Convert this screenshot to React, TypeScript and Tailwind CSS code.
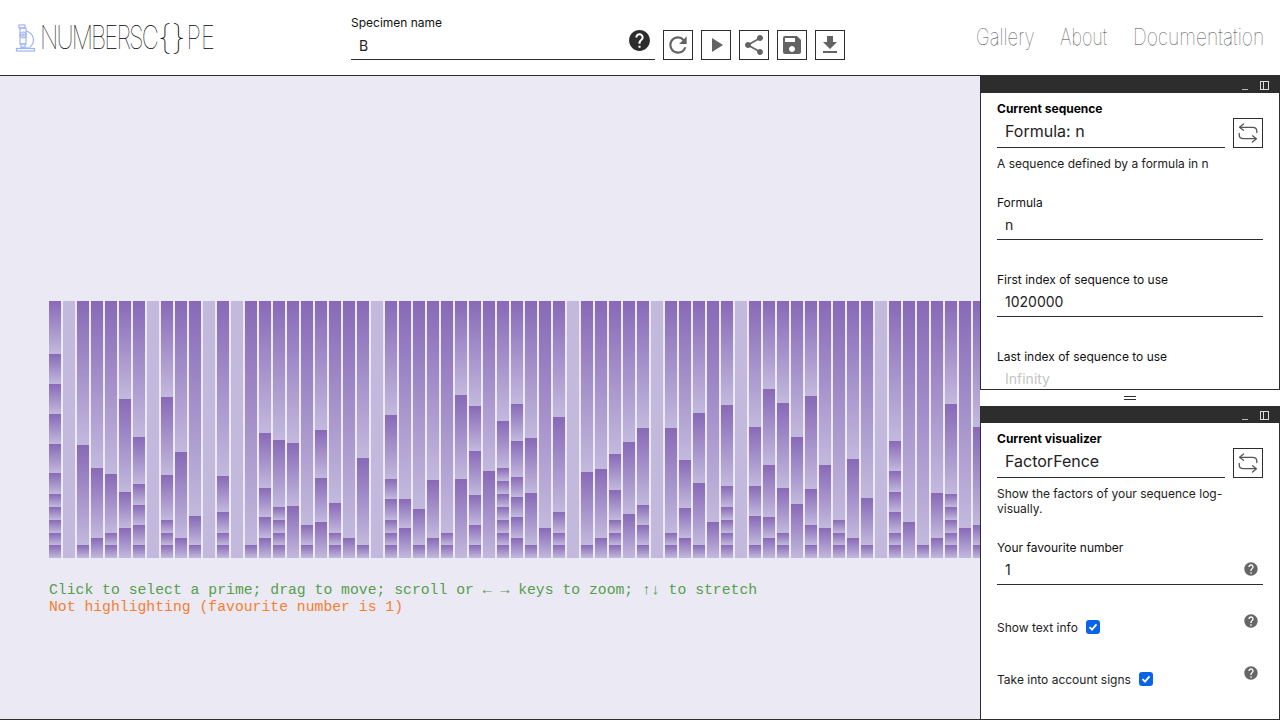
import React from "react";
import { MdHelp, MdPlayArrow, MdRefresh, MdSave, MdShare, MdFileDownload } from "react-icons/md";

const H = 257;
function factors(n: number) {
  const out: number[] = [];
  let m = n;
  for (let p = 2; p * p <= m; p++) {
    while (m % p === 0) {
      out.push(p);
      m = m / p;
    }
  }
  if (m > 1) out.push(m);
  return out.reverse();
}

function Bar({ n }: { n: number }) {
  const fs = factors(n);
  const prime = fs.length === 1;
  return (
    <div className="flex h-[257px] w-[12px] shrink-0 flex-col bg-[#c3b9dd]">
      {!prime &&
        fs.map((p, i) => (
          <div
            key={i}
            className="bg-gradient-to-b from-[#8869b7] to-[#c3b9dd]"
            style={{ height: (Math.log(p) / Math.log(n)) * H }}
          />
        ))}
    </div>
  );
}

function Swap() {
  return (
    <svg width="20" height="20" viewBox="0 0 20 20" fill="none" stroke="#555" strokeWidth="1.3" strokeLinecap="round" strokeLinejoin="round">
      <path d="M5.5 1 L1.6 4.2 L5.5 7.2" />
      <path d="M2 4.3 H14.5 Q18.8 4.3 18.8 8 V9.5" />
      <path d="M14.5 19 L18.4 15.8 L14.5 12.8" />
      <path d="M18 15.7 H5.5 Q1.2 15.7 1.2 12 V10.5" />
    </svg>
  );
}

function IconBox({ children }: { children: React.ReactNode }) {
  return (
    <button className="flex h-[30px] w-[30px] items-center justify-center border border-[#2d2d2d] bg-white text-[#636363]">
      {children}
    </button>
  );
}

function TitleBar() {
  return (
    <div className="flex h-[17px] shrink-0 items-center justify-end gap-[12px] bg-[#2d2d2d] pr-[10px] pt-px">
      <div className="mt-[9px] h-px w-[6px] bg-[#bbbbbb]" />
      <div className="flex h-[9px] w-[9px] border border-[#dddddd]">
        <div className="h-full w-[3px] border-r border-[#dddddd]" />
      </div>
    </div>
  );
}

function Field({ label, value, muted, help, className }: { label: string; value: string; muted?: boolean; help?: boolean; className?: string }) {
  return (
    <div className={className}>
      <div className="text-[12px] leading-[15px] text-[#111111]">{label}</div>
      <div className="mt-[3px] flex h-[27px] items-center justify-between border-b border-[#2d2d2d] pb-[4px] pl-[8px] pr-[4px]">
        <span className={`text-[14px] ${muted ? "text-[#c4c4c4]" : "text-[#222222]"}`}>{value}</span>
        {help && <MdHelp className="text-[#666666]" size={16} />}
      </div>
    </div>
  );
}

function Picker({ title, value }: { title: string; value: string }) {
  return (
    <>
      <div className="mt-[8px] text-[12px] font-bold leading-[16px] text-black">{title}</div>
      <div className="mt-px flex items-end gap-[8px]">
        <div className="flex h-[30px] flex-1 items-center border-b border-[#2d2d2d] pb-[3px] pl-[8px] text-[16px] text-[#222222]">{value}</div>
        <button className="flex h-[30px] w-[30px] items-center justify-center border border-[#2d2d2d]">
          <Swap />
        </button>
      </div>
    </>
  );
}

function Check({ label, className }: { label: string; className?: string }) {
  return (
    <div className={`flex justify-between pr-[4px] ${className ?? ""}`}>
      <div className="mt-[5px] flex h-[18px] items-center gap-[8px] text-[12px] text-[#222222]">
        <span className="mt-[2px]">{label}</span>
        <span className="flex h-[14px] w-[14px] items-center justify-center rounded-[3px] bg-[#0b63e5]">
          <svg width="10" height="10" viewBox="0 0 10 10" fill="none" stroke="white" strokeWidth="1.8">
            <path d="M1.5 5.2 L4 7.7 L8.5 2.4" />
          </svg>
        </span>
      </div>
      <MdHelp className="text-[#666666]" size={16} />
    </div>
  );
}

export default function App() {
  const bars = Array.from({ length: 67 }, (_, i) => 1020000 + i);
  return (
    <div className="flex h-[720px] w-[1280px] flex-col overflow-hidden bg-white font-['Inter',sans-serif]">
      <header className="flex h-[76px] shrink-0 border-b border-[#2d2d2d]">
        <div className="flex w-[351px] items-center pl-[15px]">
          <svg width="22" height="28" viewBox="0 0 22 28" fill="none" stroke="#9db3f5" strokeWidth="1.2">
            <rect x="4" y="1" width="6" height="3" />
            <rect x="5" y="4" width="6" height="16" />
            <circle cx="8" cy="11" r="3" />
            <circle cx="8" cy="11" r="1.2" />
            <path d="M11 7 C19 9 21 18 15 23" />
            <rect x="6" y="20" width="4" height="3" />
            <path d="M5 24 H15" />
            <rect x="1.5" y="24.5" width="18" height="2.5" />
          </svg>
          <span className="ml-[3px] origin-left scale-x-[0.72] whitespace-nowrap text-[33px] font-thin leading-none text-black">
            <span className="tracking-[-2.6px]">NUMBERSC</span>
            <span className="inline-block w-[19px] origin-left scale-x-[1.6]">{"{"}</span>
            <span className="inline-block w-[19px] origin-left scale-x-[1.6]">{"}"}</span>
            <span className="ml-[3px]">PE</span>
          </span>
        </div>
        <div className="w-[304px] pt-[15px]">
          <div className="text-[12px] leading-[15px] text-[#111111]">Specimen name</div>
          <div className="mt-px flex h-[29px] items-center justify-between border-b border-[#2d2d2d] pl-[8px] pr-[3px]">
            <span className="text-[14px] text-[#222222]">B</span>
            <MdHelp className="mb-[9px] text-[#2d2d2d]" size={25} />
          </div>
        </div>
        <div className="ml-[8px] mt-[30px] flex h-[30px] gap-[8px]">
          <IconBox><MdRefresh size={26} /></IconBox>
          <IconBox><MdPlayArrow size={24} /></IconBox>
          <IconBox><MdShare size={24} /></IconBox>
          <IconBox><MdSave size={24} /></IconBox>
          <IconBox><MdFileDownload size={24} /></IconBox>
        </div>
        <nav className="ml-auto flex items-center gap-[26px] pr-[16px] text-[23px] font-thin text-[#444444]">
          <span className="w-[58px] origin-left scale-x-[0.81] whitespace-nowrap">Gallery</span>
          <span className="w-[47px] origin-left scale-x-[0.78] whitespace-nowrap">About</span>
          <span className="w-[131px] origin-left scale-x-[0.835] whitespace-nowrap">Documentation</span>
        </nav>
      </header>
      <main className="flex min-h-0 flex-1 border-b border-[#2d2d2d]">
        <div className="min-w-0 flex-1 overflow-hidden bg-[#ebe9f4] pl-[49px] pt-[225.3px]">
          <div className="flex gap-[2px]">
            {bars.map((n) => (
              <Bar key={n} n={n} />
            ))}
          </div>
          <div className="mt-[23.7px] whitespace-nowrap font-['Liberation_Mono',monospace] text-[14.75px] leading-[17px]">
            <div className="text-[#569f4c]">Click to select a prime; drag to move; scroll or ← → keys to zoom; ↑↓ to stretch</div>
            <div className="text-[#f58030]">Not highlighting (favourite number is 1)</div>
          </div>
        </div>
        <aside className="flex w-[300px] shrink-0 flex-col">
          <section className="h-[314px] overflow-hidden border-x border-b border-[#2d2d2d]">
            <TitleBar />
            <div className="px-[16px]">
              <Picker title="Current sequence" value="Formula: n" />
              <p className="mt-[8px] text-[12px] leading-[15px] text-[#222222]">A sequence defined by a formula in n</p>
              <Field className="mt-[24px]" label="Formula" value="n" />
              <Field className="mt-[32px]" label="First index of sequence to use" value="1020000" />
              <Field className="mt-[32px]" label="Last index of sequence to use" value="Infinity" muted />
            </div>
          </section>
          <div className="flex h-[16px] shrink-0 items-center justify-center">
            <div className="h-[4px] w-[12px] border-y border-[#2d2d2d]" />
          </div>
          <section className="min-h-0 flex-1 overflow-hidden border-x border-[#2d2d2d]">
            <TitleBar />
            <div className="px-[16px]">
              <Picker title="Current visualizer" value="FactorFence" />
              <p className="mt-[8px] w-[240px] text-[12px] leading-[15px] text-[#222222]">Show the factors of your sequence log-visually.</p>
              <Field className="mt-[24px]" label="Your favourite number" value="1" help />
              <Check className="mt-[28px]" label="Show text info" />
              <Check className="mt-[29px]" label="Take into account signs" />
            </div>
          </section>
        </aside>
      </main>
    </div>
  );
}
